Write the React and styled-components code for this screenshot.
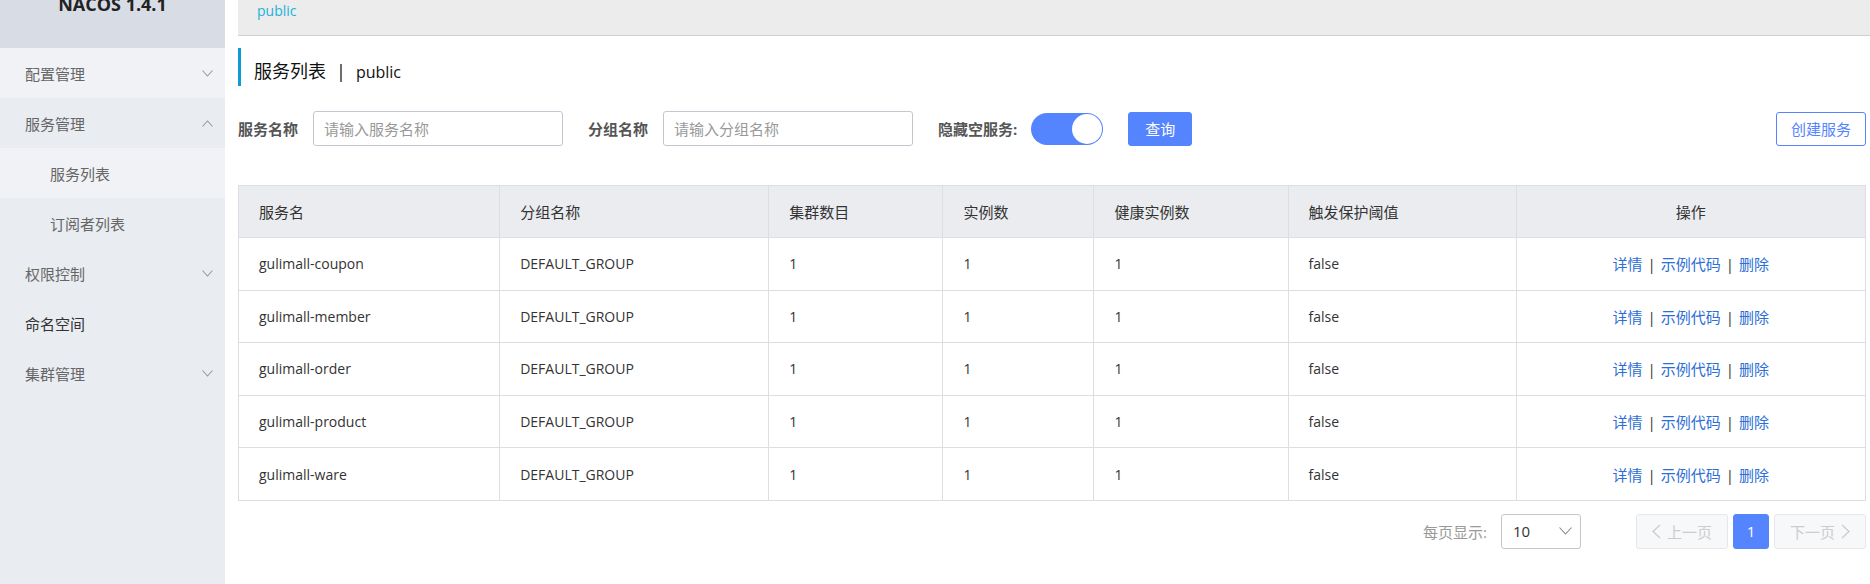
import styled, { createGlobalStyle } from 'styled-components'

const GlobalStyle = createGlobalStyle`
  body {
    margin: 0;
    background: #fff;
    font-family: "Open Sans", "Noto Sans CJK SC", sans-serif;
    color: #333;
  }
`

const Page = styled.div`
  display: flex;
  height: 584px;
  overflow: hidden;
`

const Sidebar = styled.div`
  width: 225px;
  flex-shrink: 0;
  background: #e9ecf1;
`

const Brand = styled.div`
  height: 48px;
  background: #d8dde5;
  display: flex;
  justify-content: center;
  align-items: flex-start;
  font-size: 18px;
  font-weight: 700;
  color: #222;
  line-height: 24px;

  span {
    margin-top: -8px;
  }
`

const MenuItem = styled.div`
  height: 50px;
  display: flex;
  align-items: center;
  justify-content: space-between;
  padding: 0 12px 0 ${(p) => (p.sub ? 50 : 25)}px;
  background: ${(p) => (p.light ? '#f0f2f5' : '#e9ecf1')};
  font-size: 15px;
  color: ${(p) => (p.dark ? '#333' : '#666')};
`

const Chevron = ({ up }) => (
  <svg width="11" height="7" viewBox="0 0 11 7" fill="none">
    <path
      d={up ? 'M0.5 6.5 L5.5 1 L10.5 6.5' : 'M0.5 0.5 L5.5 6 L10.5 0.5'}
      stroke="#999"
      strokeWidth="1.1"
    />
  </svg>
)

const Main = styled.div`
  flex: 1;
  margin-left: 13px;
  display: flex;
  flex-direction: column;
  min-width: 0;
`

const TopBar = styled.div`
  height: 35px;
  background: #ececec;
  border-bottom: 1px solid #cfcfcf;
  padding-left: 19px;
  line-height: 22px;
  font-size: 14px;
  color: #1ab2dc;
`

const Content = styled.div`
  padding-right: 4px;
`

const Title = styled.div`
  margin-top: 12px;
  height: 38px;
  box-sizing: border-box;
  border-left: 3px solid #0e9bd4;
  padding: 8px 0 0 13px;
  line-height: 30px;
  font-size: 18px;
  color: #111;

  i {
    font-style: normal;
    margin: 0 10px;
  }

  b {
    font-weight: 400;
    font-size: 16px;
  }
`

const FilterRow = styled.div`
  margin-top: 25px;
  height: 35px;
  display: flex;
  align-items: center;
`

const FormItem = styled.div`
  display: flex;
  align-items: center;
  gap: ${(p) => p.gap || 15}px;
  margin-right: 25px;
`

const Label = styled.span`
  font-size: 15px;
  font-weight: 700;
  color: #555;
`

const Input = styled.input`
  width: 250px;
  height: 35px;
  box-sizing: border-box;
  border: 1px solid #c4c6cf;
  border-radius: 3px;
  padding: 0 10px;
  font-size: 15px;
  font-family: inherit;
  outline: none;

  &::placeholder {
    color: #999;
  }
`

const Switch = styled.div`
  width: 72px;
  height: 32px;
  border-radius: 16px;
  background: #5584ff;
  display: flex;
  align-items: center;
  justify-content: flex-end;
  padding: 0 1px;
  box-sizing: border-box;

  &::after {
    content: '';
    width: 30px;
    height: 30px;
    border-radius: 50%;
    background: #fff;
  }
`

const Button = styled.button`
  height: 34px;
  padding: 0 ${(p) => (p.outline ? 14 : 16)}px;
  border-radius: 3px;
  font-size: 15px;
  font-family: inherit;
  border: 1px solid #5584ff;
  background: ${(p) => (p.outline ? '#fff' : '#5584ff')};
  color: ${(p) => (p.outline ? '#5584ff' : '#fff')};
  margin-left: ${(p) => (p.push ? 'auto' : '0')};
`

const Table = styled.table`
  margin-top: 39px;
  width: 100%;
  table-layout: fixed;
  border-collapse: collapse;
  border: 1px solid #dcdee3;
`

const Th = styled.th`
  height: 51px;
  background: #ebecf0;
  border: 1px solid #dcdee3;
  padding: 0 20px;
  font-size: 15px;
  font-weight: 400;
  color: #333;
  text-align: ${(p) => (p.center ? 'center' : 'left')};
`

const Td = styled.td`
  height: 51.6px;
  border: 1px solid #dcdee3;
  padding: 0 20px;
  font-size: 14px;
  color: #333;
  text-align: ${(p) => (p.center ? 'center' : 'left')};
`

const Ops = styled.span`
  font-size: 15px;

  a {
    color: #2c6fd6;
    text-decoration: none;
  }

  i {
    font-style: normal;
    color: #333;
    margin: 0 5px;
  }
`

const Pager = styled.div`
  margin-top: 13px;
  display: flex;
  align-items: center;
  justify-content: flex-end;
`

const PagerLabel = styled.span`
  font-size: 15px;
  color: #999;
  margin-right: 14px;
`

const Select = styled.div`
  width: 80px;
  height: 35px;
  box-sizing: border-box;
  border: 1px solid #c4c6cf;
  border-radius: 3px;
  display: flex;
  align-items: center;
  justify-content: space-between;
  padding: 0 8px 0 11px;
  font-size: 15px;
  color: #333;
  margin-right: 50px;
`

const PageBtn = styled.div`
  height: 35px;
  width: ${(p) => (p.active ? 36 : 92)}px;
  box-sizing: border-box;
  border-radius: 3px;
  margin-left: 5px;
  display: flex;
  align-items: center;
  justify-content: center;
  gap: 6px;
  font-size: 15px;
  border: 1px solid ${(p) => (p.active ? '#5584ff' : '#e6e7eb')};
  background: ${(p) => (p.active ? '#5584ff' : '#f7f8fa')};
  color: ${(p) => (p.active ? '#fff' : '#ccc')};
`

const Arrow = ({ right }) => (
  <svg width="9" height="15" viewBox="0 0 9 15" fill="none">
    <path
      d={right ? 'M1 1 L8 7.5 L1 14' : 'M8 1 L1 7.5 L8 14'}
      stroke="#ccc"
      strokeWidth="1.3"
    />
  </svg>
)

const services = ['gulimall-coupon', 'gulimall-member', 'gulimall-order', 'gulimall-product', 'gulimall-ware']
const widths = [261, 269, 174, 151, 194, 228, 349]

export default function App() {
  return (
    <>
      <GlobalStyle />
      <Page>
        <Sidebar>
          <Brand>
            <span>NACOS 1.4.1</span>
          </Brand>
          <MenuItem light>
            配置管理
            <Chevron />
          </MenuItem>
          <MenuItem>
            服务管理
            <Chevron up />
          </MenuItem>
          <MenuItem sub light>
            服务列表
          </MenuItem>
          <MenuItem sub>订阅者列表</MenuItem>
          <MenuItem>
            权限控制
            <Chevron />
          </MenuItem>
          <MenuItem dark>命名空间</MenuItem>
          <MenuItem>
            集群管理
            <Chevron />
          </MenuItem>
        </Sidebar>
        <Main>
          <TopBar>public</TopBar>
          <Content>
            <Title>
              服务列表<i>|</i><b>public</b>
            </Title>
            <FilterRow>
              <FormItem>
                <Label>服务名称</Label>
                <Input placeholder="请输入服务名称" />
              </FormItem>
              <FormItem>
                <Label>分组名称</Label>
                <Input placeholder="请输入分组名称" />
              </FormItem>
              <FormItem gap={14}>
                <Label>隐藏空服务:</Label>
                <Switch />
              </FormItem>
              <Button>查询</Button>
              <Button outline push>
                创建服务
              </Button>
            </FilterRow>
            <Table>
              <colgroup>
                {widths.map((w, i) => (
                  <col key={i} style={{ width: w }} />
                ))}
              </colgroup>
              <thead>
                <tr>
                  <Th>服务名</Th>
                  <Th>分组名称</Th>
                  <Th>集群数目</Th>
                  <Th>实例数</Th>
                  <Th>健康实例数</Th>
                  <Th>触发保护阈值</Th>
                  <Th center>操作</Th>
                </tr>
              </thead>
              <tbody>
                {services.map((s) => (
                  <tr key={s}>
                    <Td>{s}</Td>
                    <Td>DEFAULT_GROUP</Td>
                    <Td>1</Td>
                    <Td>1</Td>
                    <Td>1</Td>
                    <Td>false</Td>
                    <Td center>
                      <Ops>
                        <a>详情</a>
                        <i>|</i>
                        <a>示例代码</a>
                        <i>|</i>
                        <a>删除</a>
                      </Ops>
                    </Td>
                  </tr>
                ))}
              </tbody>
            </Table>
            <Pager>
              <PagerLabel>每页显示:</PagerLabel>
              <Select>
                10
                <svg width="13" height="8" viewBox="0 0 13 8" fill="none">
                  <path d="M0.5 0.5 L6.5 7 L12.5 0.5" stroke="#888" strokeWidth="1.1" />
                </svg>
              </Select>
              <PageBtn>
                <Arrow />
                上一页
              </PageBtn>
              <PageBtn active>1</PageBtn>
              <PageBtn>
                下一页
                <Arrow right />
              </PageBtn>
            </Pager>
          </Content>
        </Main>
      </Page>
    </>
  )
}
